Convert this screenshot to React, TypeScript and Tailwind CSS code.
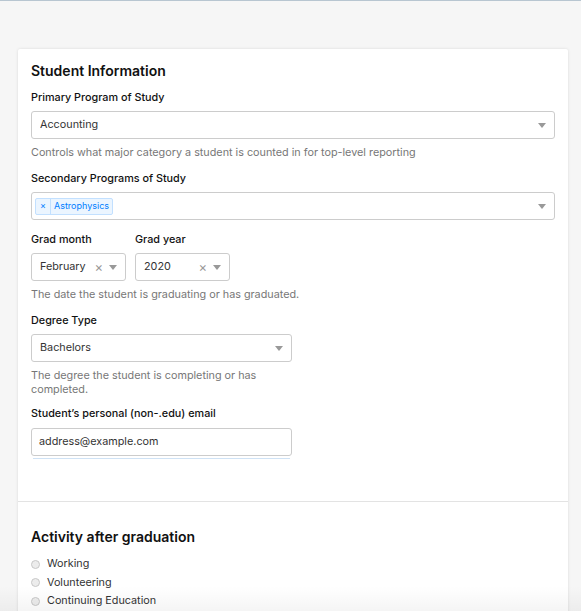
import React from "react"

const font = { fontFamily: '"Inter", "Liberation Sans", sans-serif' }

function Arrow() {
  return (
    <span className="inline-block w-0 h-0 border-x-[4px] border-x-transparent border-t-[5px] border-t-[#999]" />
  )
}

function Select({ value, width, clearable = false }: { value: string; width: string; clearable?: boolean }) {
  return (
    <div className={`${width} h-[28px] flex items-center border border-[#ccc] rounded-[3px] bg-white pl-[8px] pr-[8px]`}>
      <span className="flex-1 text-[10.8px] text-[#333] truncate">{value}</span>
      {clearable && <span className="text-[13px] leading-none text-[#999] mr-[6px]">×</span>}
      <Arrow />
    </div>
  )
}

function Label({ children, mb = "mb-[6px]" }: { children: React.ReactNode; mb?: string }) {
  return <div className={`text-[10.8px] leading-[14px] font-medium text-[#111] ${mb}`}>{children}</div>
}

function Help({ children }: { children: React.ReactNode }) {
  return <p className="text-[10.8px] text-[#777] leading-[14px] mt-[7px]">{children}</p>
}

export default function App() {
  return (
    <div style={font} className="relative w-[581px] h-[611px] overflow-hidden bg-[#f6f6f6] border-t border-[#b8c6d1]">
      <div className="ml-[18px] mt-[48px] w-[550px] bg-white rounded-[2px] shadow-[0_0_3px_rgba(0,0,0,0.12)]">
        {/* Student info */}
        <div className="px-[13px] pt-[12px] pb-[42px]">
          <h2 className="text-[14px] leading-[20px] font-semibold text-[#111] mb-[10px]">Student Information</h2>

          <Label>Primary Program of Study</Label>
          <Select value="Accounting" width="w-[524px]" />
          <Help>Controls what major category a student is counted in for top-level reporting</Help>

          <div className="mt-[12px]">
            <Label>Secondary Programs of Study</Label>
            <div className="w-[524px] h-[28px] flex items-center border border-[#ccc] rounded-[3px] bg-white pl-[3px] pr-[8px]">
              <div className="flex-1 flex">
                <span className="flex items-center h-[17px] border border-[#c2e0ff] bg-[#ebf5ff] rounded-[2px] text-[#007eff] text-[9px]">
                  <span className="px-[4px] h-full flex items-center border-r border-[#c2e0ff]">×</span>
                  <span className="px-[3px]">Astrophysics</span>
                </span>
              </div>
              <Arrow />
            </div>
          </div>

          <div className="mt-[13px] flex gap-[9px]">
            <div>
              <Label>Grad month</Label>
              <Select value="February" width="w-[95px]" clearable />
            </div>
            <div>
              <Label>Grad year</Label>
              <Select value="2020" width="w-[95px]" clearable />
            </div>
          </div>
          <Help>The date the student is graduating or has graduated.</Help>

          <div className="mt-[12px]">
            <Label>Degree Type</Label>
            <Select value="Bachelors" width="w-[261px]" />
            <Help>
              The degree the student is completing or has
              <br />
              completed.
            </Help>
          </div>

          <div className="mt-[10px]">
            <Label mb="mb-[7px]">Student’s personal (non-.edu) email</Label>
            <div className="w-[261px] h-[28px] flex items-center border border-[#ccc] rounded-[3px] bg-white px-[7px] text-[10.8px] text-[#333]">
              address@example.com
            </div>
            <div className="ml-[2px] mt-[2px] w-[257px] h-px bg-[#cfe2f5]" />
          </div>
        </div>

        <div className="border-t border-[#e3e3e3]" />

        {/* Activity */}
        <div className="px-[13px] pt-[25px] pb-[20px]">
          <h2 className="text-[14px] leading-[20px] font-semibold text-[#111] mb-[8px]">Activity after graduation</h2>
          {["Working", "Volunteering", "Continuing Education"].map(opt => (
            <label key={opt} className="flex items-center h-[18.5px] text-[10.8px] text-[#333]">
              <span className="w-[9px] h-[9px] rounded-full border border-[#c8c8c8] bg-[#ececec] mr-[7px]" />
              {opt}
            </label>
          ))}
        </div>
      </div>
      <div className="absolute left-0 right-0 bottom-0 h-[25px] bg-gradient-to-b from-transparent to-black/[0.04]" />
    </div>
  )
}
